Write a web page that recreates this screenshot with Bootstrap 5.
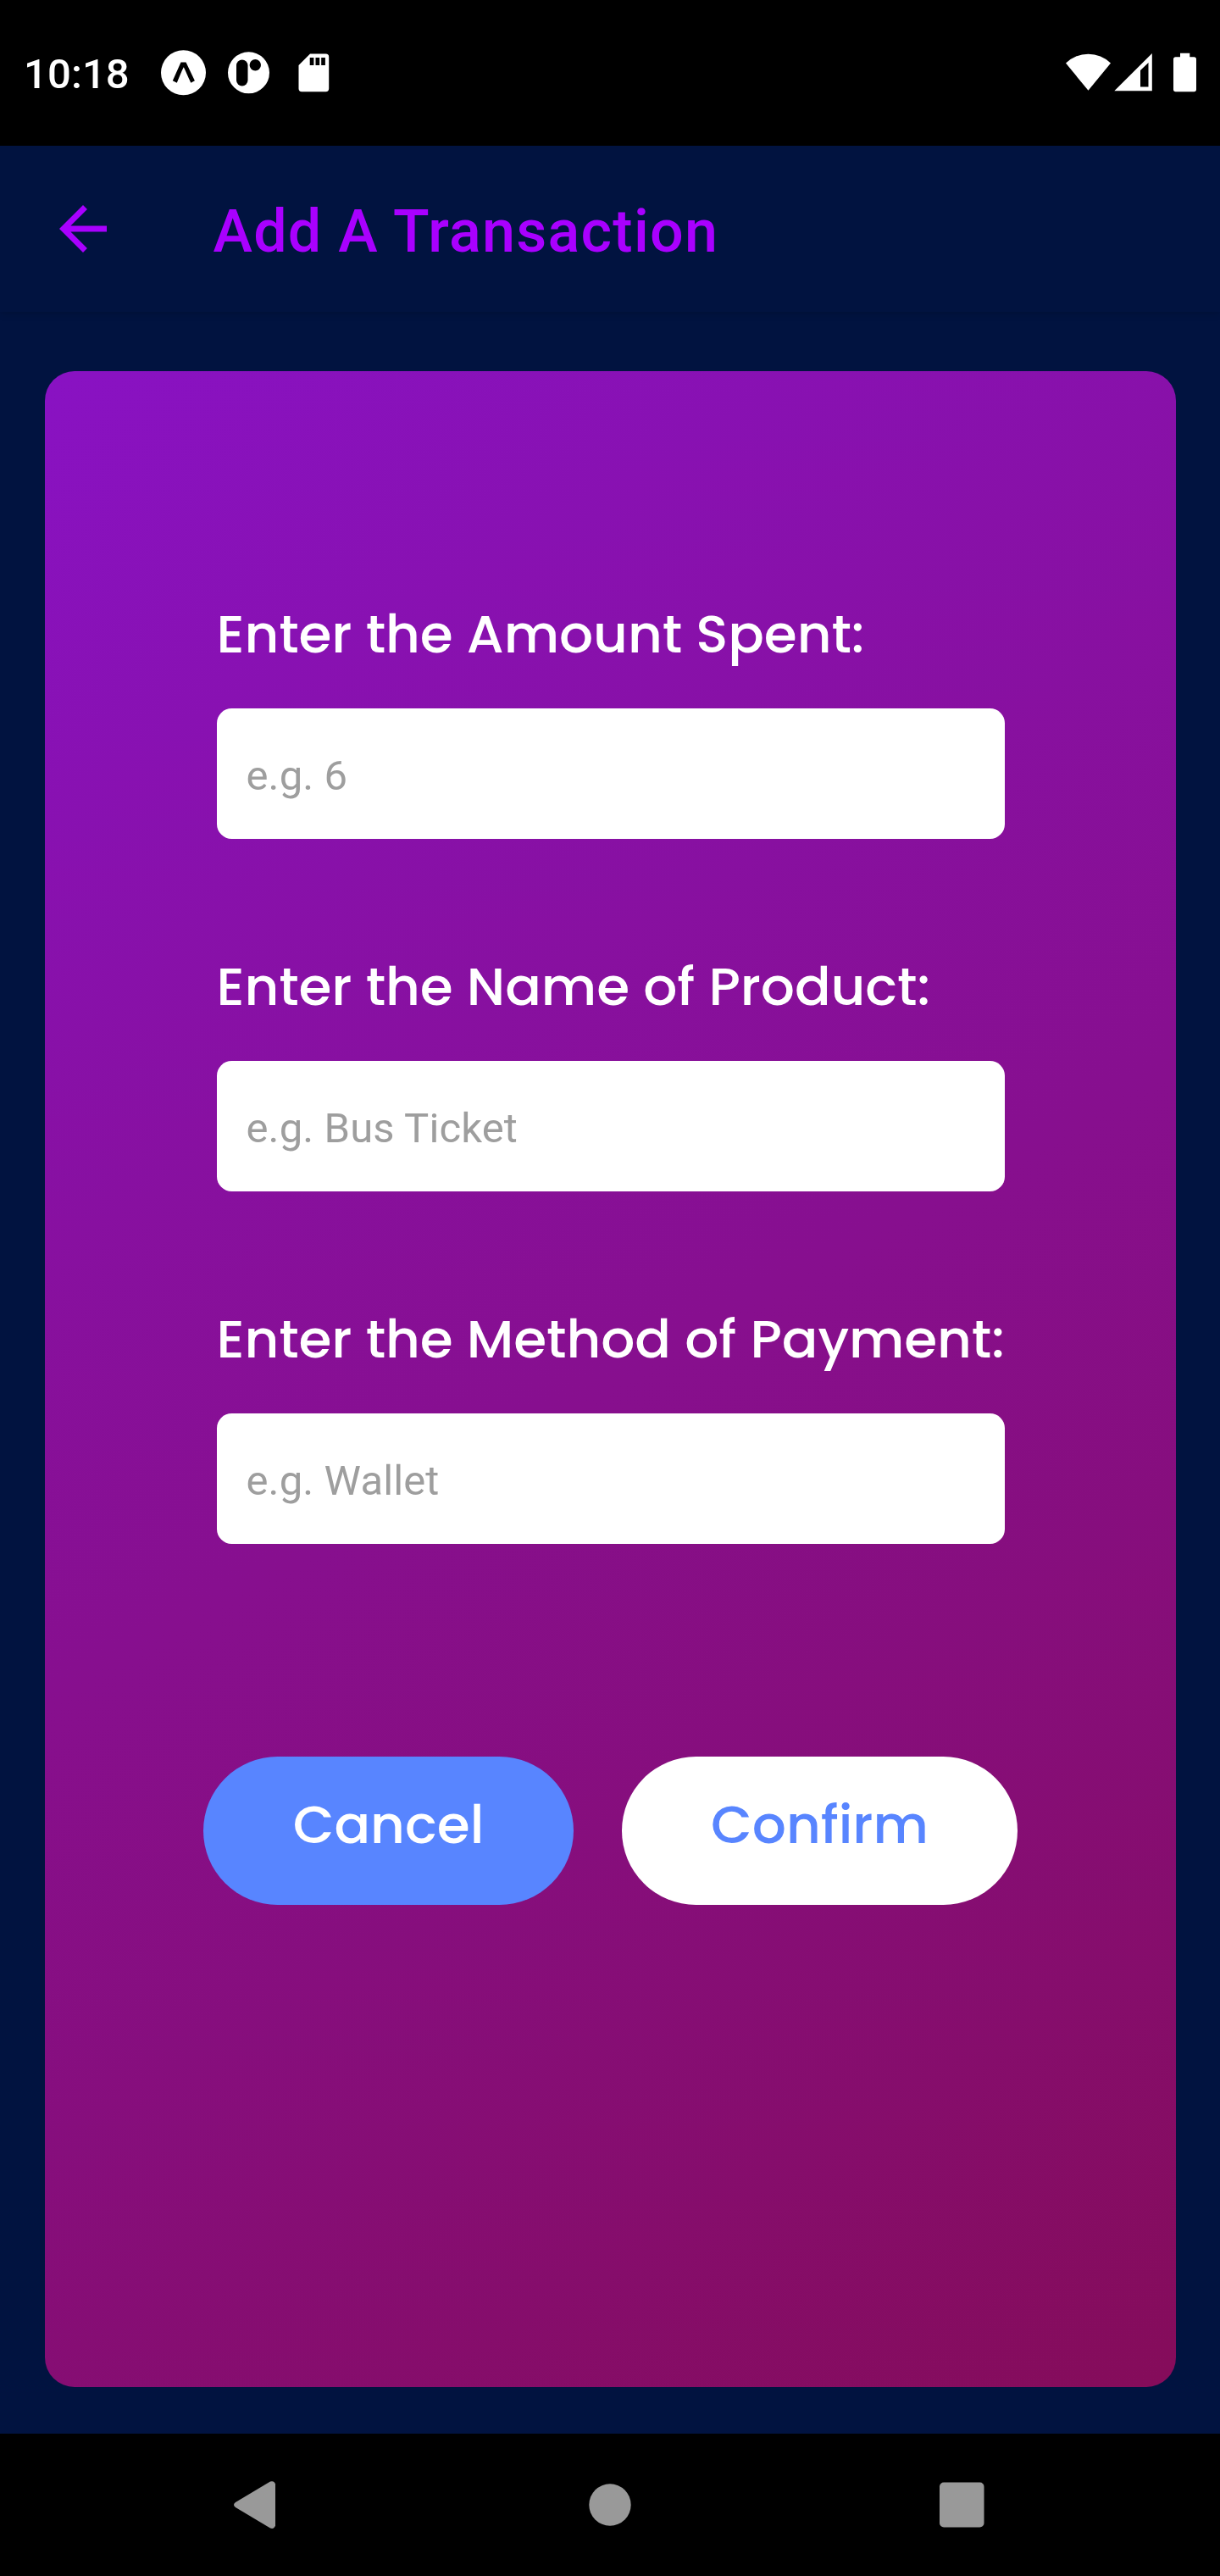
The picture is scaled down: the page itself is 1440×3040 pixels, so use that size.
<!DOCTYPE html>
<html lang="en">
<head>
<meta charset="utf-8">
<meta name="viewport" content="width=device-width, initial-scale=1">
<title>Add A Transaction</title>
<link href="https://cdn.jsdelivr.net/npm/bootstrap@5.3.0/dist/css/bootstrap.min.css" rel="stylesheet">
<style>
  body { background: #011340; font-family: Roboto, "Liberation Sans", sans-serif; }
  .screen { width: 1440px; height: 3040px; overflow: hidden; }
  .status-bar { height: 172px; padding: 0 27px 0 28px; background: #000; color: #fff; }
  .clock { font-size: 49px; font-weight: 500; line-height: 58px; width: 162px; letter-spacing: .1px; padding-top: 3px; }
  .app-bar { height: 196px; padding: 0 56px; background: #011340; box-shadow: 0 2px 9px rgba(0, 0, 0, .16); }
  .back-link { width: 84px; height: 84px; }
  .app-title { color: #a900ff; font-size: 70px; font-weight: 500; line-height: 82px; letter-spacing: 1.25px; margin: 6px 0 0 111.5px; }
  .page { padding: 70px 52px 55px 53px; }
  .form-panel { padding: 264px 0 0; border: 0; border-radius: 35px; background: linear-gradient(150.7deg, #8912c3, #850c5a); }
  .field { width: 930px; margin-bottom: 128px; }
  .form-label, .pill { font-family: Poppins, Inter, sans-serif; font-size: 63px; font-weight: 500; line-height: 94px; }
  .form-label { color: #fff; margin-bottom: 41px; margin-top: -1px; letter-spacing: -.1px; }
  .form-control { height: 154px; padding: 4px 35px 0; border: 0; border-radius: 17.5px; font-size: 49px; line-height: 58px; letter-spacing: .12px; background: #fff; }
  .form-control::placeholder { color: #9e9e9e; opacity: 1; }
  .actions { gap: 57px; margin-top: 251px; }
  .pill { height: 175px; padding: 33px 0 48px; border: 0; border-radius: 87.5px; }
  .pill-cancel, .pill-cancel:hover { width: 437px; background: #5885ff; color: #fff; }
  .pill-confirm, .pill-confirm:hover { width: 467px; background: #fff; color: #5885ff; }
  .nav-keys { height: 168px; background: #000; padding: 0 276px 0 270px; }
</style>
</head>
<body>
<div class="screen d-flex flex-column">
  <div class="status-bar d-flex align-items-center justify-content-between">
    <div class="d-flex align-items-center">
      <span class="clock">10:18</span>
      <svg width="200" height="54" viewBox="190 59.5 200 54" fill="#fff">
        <circle cx="216.5" cy="86.3" r="26.5"/>
        <path d="M213.500 74h6l10.400 21.800-4.600 2.400c-3-6.500-5.700-13-8.500-18.500-2.800 5.500-5.400 12-8 18.500l-5-2.400z" fill="#000"/>
        <circle cx="293.5" cy="86.300" r="24.500"/>
        <rect x="279" y="71" width="13.500" height="31" rx="6.750" fill="#000"/>
        <circle cx="301.300" cy="77.300" r="6.700" fill="#000"/>
        <path d="M366 64h18.500a3.700 3.700 0 0 1 3.700 3.700v37.300a3.700 3.700 0 0 1-3.700 3.700h-28.300a3.700 3.700 0 0 1-3.700-3.700V77.500z"/>
        <path d="M365.700 68.500h4.700v9h-4.700zM372.500 68.500h4.700v9h-4.700zM379.200 68.500h4.700v9h-4.700z" fill="#000"/>
      </svg>
    </div>
    <svg width="156" height="54" viewBox="1257 59.500 156 54" fill="#fff">
      <path d="M1284.500 107.300 1258 75a38 38 0 0 1 53 0z"/>
      <path fill-rule="evenodd" d="M1359.800 63.500v44.200h-44.500zM1355.500 74.500 1346 83.500v19.500h9.500z"/>
      <path d="M1393 63.300h11.300v4.500h5a2.700 2.700 0 0 1 2.700 2.700v35.500a2.700 2.700 0 0 1-2.700 2.700h-21.600a2.700 2.700 0 0 1-2.700-2.700V70.500a2.700 2.700 0 0 1 2.700-2.700h5.300z"/>
    </svg>
  </div>

  <header class="app-bar d-flex align-items-center position-relative">
    <a href="#" class="back-link d-block" aria-label="Back">
      <svg class="d-block" width="84" height="84" viewBox="0 0 24 24" fill="#a900ff"><path d="M20 11H7.830l5.590-5.590L12 4l-8 8 8 8 1.410-1.410L7.830 13H20z"/></svg>
    </a>
    <h1 class="app-title">Add A Transaction</h1>
  </header>

  <main class="page flex-grow-1 d-flex">
    <form class="form-panel card w-100 d-flex flex-column align-items-center">
      <div class="field">
        <label class="form-label d-block text-nowrap" for="amount">Enter the Amount Spent:</label>
        <input class="form-control" id="amount" type="text" placeholder="e.g. 6">
      </div>
      <div class="field">
        <label class="form-label d-block text-nowrap" for="product">Enter the Name of Product:</label>
        <input class="form-control" id="product" type="text" placeholder="e.g. Bus Ticket">
      </div>
      <div class="field mb-0">
        <label class="form-label d-block text-nowrap" for="method">Enter the Method of Payment:</label>
        <input class="form-control" id="method" type="text" placeholder="e.g. Wallet">
      </div>
      <div class="actions d-flex">
        <button type="button" class="btn pill pill-cancel">Cancel</button>
        <button type="button" class="btn pill pill-confirm">Confirm</button>
      </div>
    </form>
  </main>

  <nav class="nav-keys d-flex align-items-center justify-content-between">
    <svg width="60" height="60" viewBox="0 0 60 60" fill="#999"><path d="M8 27 49 2.500Q53.500 1 55 5.500V54.500Q53.500 59 49 57.500L8 33Q4 30 8 27z"/></svg>
    <svg width="60" height="60" viewBox="0 0 60 60" fill="#999"><circle cx="33" cy="30" r="24.700"/></svg>
    <svg width="60" height="60" viewBox="0 0 60 60" fill="#999"><rect x="5" y="3.500" width="52.500" height="53" rx="5"/></svg>
  </nav>
</div>
<script src="https://cdn.jsdelivr.net/npm/bootstrap@5.3.0/dist/js/bootstrap.bundle.min.js"></script>
</body>
</html>
